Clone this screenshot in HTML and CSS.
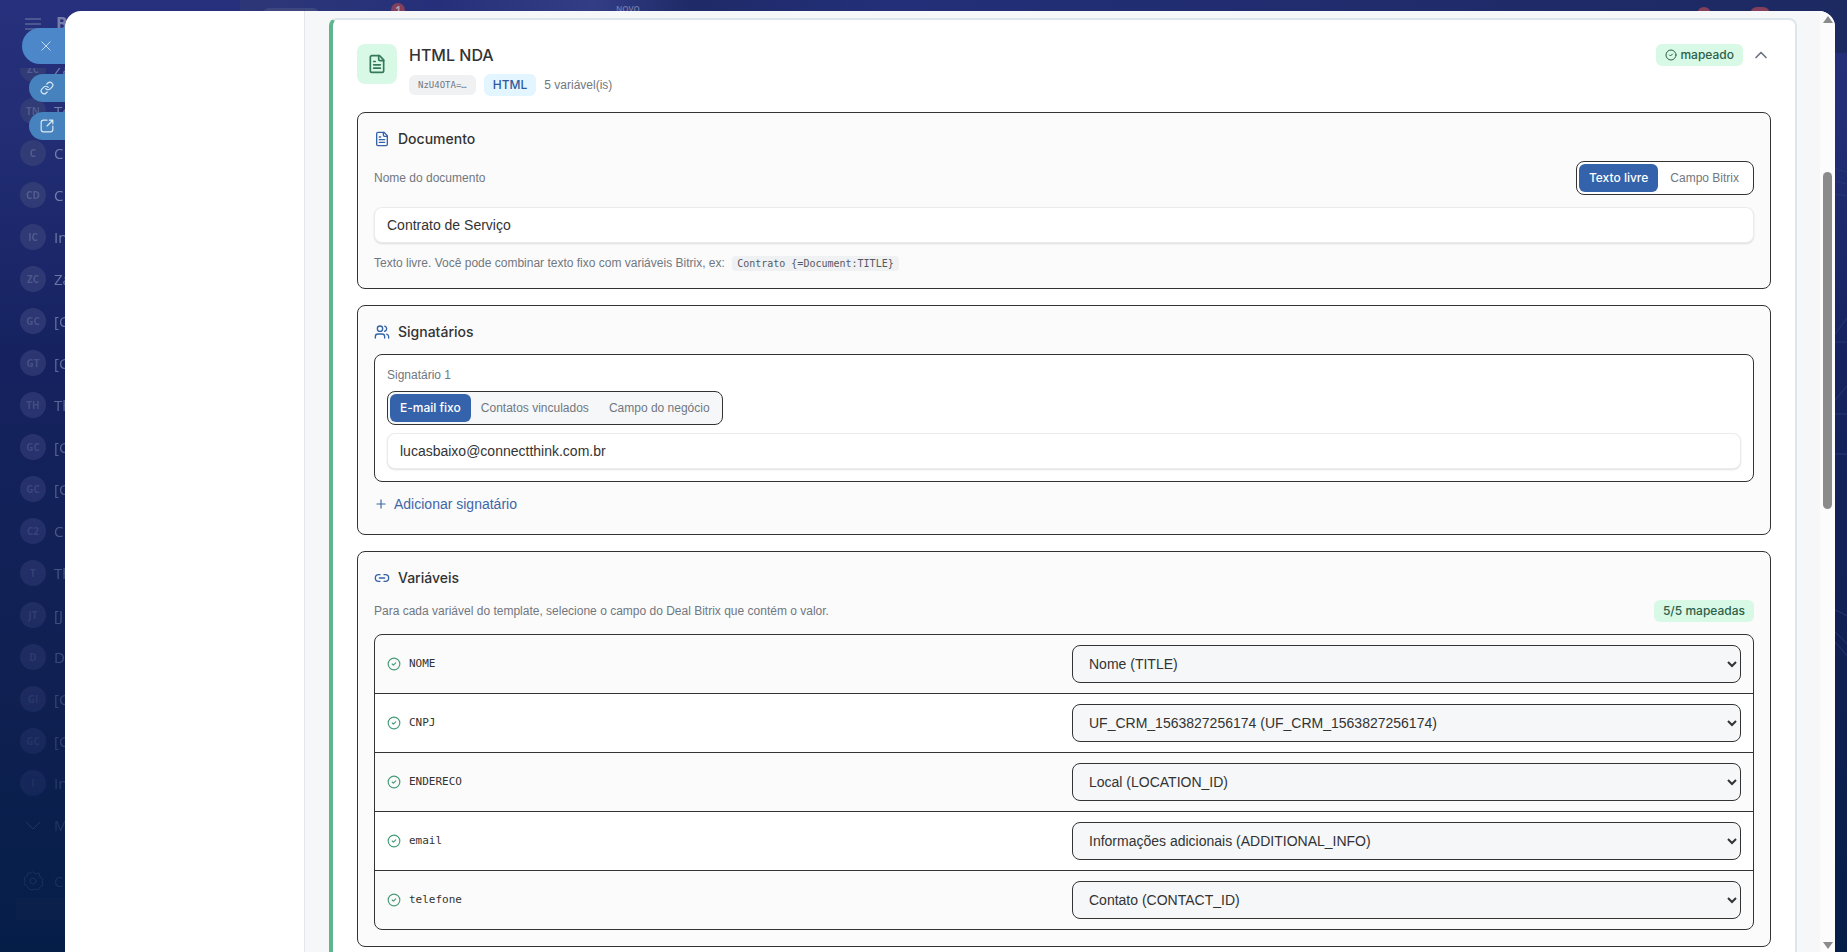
FILE: index.html
```html
<!DOCTYPE html>
<html lang="pt-BR">
<head>
    <meta charset="UTF-8">
    <meta name="viewport" content="width=device-width, initial-scale=1.0">
    <title>HTML NDA</title>
    <link rel="stylesheet" href="styles.css">
</head>
<body>
    <svg width="0" height="0" class="sprite">
        <symbol id="file" viewBox="0 0 24 24"><path d="M15 2H6a2 2 0 0 0-2 2v16a2 2 0 0 0 2 2h12a2 2 0 0 0 2-2V7Z"/><path d="M14 2v4a2 2 0 0 0 2 2h4"/><path d="M10 9H8"/><path d="M16 13H8"/><path d="M16 17H8"/></symbol>
        <symbol id="check" viewBox="0 0 24 24"><circle cx="12" cy="12" r="10"/><path d="m9 12 2 2 4-4"/></symbol>
    </svg>

    <!-- portal behind the slider -->
    <div class="backdrop">
        <div class="topbar">
            <span class="pill"></span>
            <span class="dot">1</span>
            <span class="novo">NOVO</span>
            <span class="dot dot-bell"></span>
            <span class="dot dot-user"></span>
        </div>
        <svg class="waves" viewBox="0 0 12 952" preserveAspectRatio="none"><path d="M0 168q6 3 12 4M0 181q6 2 12 3M0 194l12 2M0 334l12-16M0 342h12M0 400l12-14M0 414h12M0 454h12M0 610q8 3 12 6M0 632q6 5 12 12M0 642q6 6 12 14"/></svg>
        <div class="brand">
            <svg class="burger" viewBox="0 0 16 12"><path d="M0 1h16M0 6h16M0 11h16"/></svg>
            <span>B</span>
        </div>
        <ul class="menu">
            <li><i>ZC</i>Za</li>
            <li><i>TN</i>To</li>
            <li><i>C</i>C</li>
            <li><i>CD</i>C</li>
            <li><i>IC</i>In</li>
            <li><i>ZC</i>Za</li>
            <li><i>GC</i>[G</li>
            <li><i>GT</i>[G</li>
            <li><i>TH</i>Th</li>
            <li><i>GC</i>[G</li>
            <li><i>GC</i>[G</li>
            <li><i>C2</i>C</li>
            <li><i>T</i>Th</li>
            <li><i>JT</i>[J</li>
            <li><i>D</i>D</li>
            <li><i>GI</i>[G</li>
            <li><i>GC</i>[G</li>
            <li><i>I</i>In</li>
            <li><svg viewBox="0 0 26 26"><path d="M6 10l7 7 7-7"/></svg>M</li>
            <li class="config"><svg viewBox="0 0 26 26"><circle cx="13" cy="13" r="3"/><path d="M13 4l3 2 3-1 1 4 3 2-1 3 1 3-3 2-2 3-3-1-3 1-3-1-2-3-3-2 1-3-1-3 3-2 1-3 3 0z"/></svg>C</li>
        </ul>
        <div class="invite"></div>
    </div>

    <nav class="slider-labels">
        <button class="slider-label slider-close" aria-label="Fechar"><svg viewBox="0 0 12 12"><path d="M1 1l10 10M11 1L1 11"/></svg></button>
        <button class="slider-label" aria-label="Copiar link"><svg viewBox="0 0 24 24"><path d="M10 13a5 5 0 0 0 7.54.54l3-3a5 5 0 0 0-7.07-7.07l-1.72 1.71"/><path d="M14 11a5 5 0 0 0-7.54-.54l-3 3a5 5 0 0 0 7.07 7.07l1.71-1.71"/></svg></button>
        <button class="slider-label" aria-label="Abrir em nova aba"><svg viewBox="0 0 24 24"><path d="M12 2H6a4 4 0 0 0-4 4v12a4 4 0 0 0 4 4h12a4 4 0 0 0 4-4v-6M16 2h6v6M21 3l-9 9"/></svg></button>
    </nav>

    <div class="slider">
        <aside class="sidebar"></aside>

        <main class="main">
            <article class="card">
                <header class="card-header">
                    <span class="card-icon"><svg class="icon"><use href="#file"/></svg></span>
                    <div class="card-title">
                        <h1>HTML NDA</h1>
                        <div class="card-meta">
                            <code class="chip chip-id">NzU4OTA=…</code>
                            <span class="chip chip-type">HTML</span>
                            <span>5 variável(is)</span>
                        </div>
                    </div>
                    <span class="badge"><svg class="icon"><use href="#check"/></svg>mapeado</span>
                    <button class="collapse" aria-label="Recolher"><svg class="icon" viewBox="0 0 24 24"><path d="m18 15-6-6-6 6"/></svg></button>
                </header>

                <section class="section">
                    <h2><svg class="icon"><use href="#file"/></svg>Documento</h2>
                    <div class="row">
                        <label for="doc-name">Nome do documento</label>
                        <div class="toggle toggle-white">
                            <button class="active">Texto livre</button>
                            <button>Campo Bitrix</button>
                        </div>
                    </div>
                    <input id="doc-name" class="input" type="text" value="Contrato de Serviço">
                    <p class="hint">Texto livre. Você pode combinar texto fixo com variáveis Bitrix, ex: <code>Contrato {=Document:TITLE}</code></p>
                </section>

                <section class="section section-signers">
                    <h2><svg class="icon" viewBox="0 0 24 24"><path d="M16 21v-2a4 4 0 0 0-4-4H6a4 4 0 0 0-4 4v2"/><circle cx="9" cy="7" r="4"/><path d="M22 21v-2a4 4 0 0 0-3-3.87"/><path d="M16 3.13a4 4 0 0 1 0 7.75"/></svg>Signatários</h2>
                    <div class="signer">
                        <label for="signer-1">Signatário 1</label>
                        <div class="toggle">
                            <button class="active">E-mail fixo</button>
                            <button>Contatos vinculados</button>
                            <button>Campo do negócio</button>
                        </div>
                        <input id="signer-1" class="input" type="text" value="lucasbaixo@connectthink.com.br">
                    </div>
                    <button class="add"><svg class="icon" viewBox="0 0 24 24"><path d="M5 12h14"/><path d="M12 5v14"/></svg>Adicionar signatário</button>
                </section>

                <section class="section">
                    <h2><svg class="icon" viewBox="0 0 24 24"><path d="M9 17H7A5 5 0 0 1 7 7h2"/><path d="M15 7h2a5 5 0 1 1 0 10h-2"/><path d="M8 12h8"/></svg>Variáveis</h2>
                    <div class="row">
                        <p>Para cada variável do template, selecione o campo do Deal Bitrix que contém o valor.</p>
                        <span class="badge">5/5 mapeadas</span>
                    </div>
                    <div class="vars">
                        <div class="var">
                            <label for="var-nome"><svg class="icon"><use href="#check"/></svg>NOME</label>
                            <select id="var-nome"><option>Nome (TITLE)</option></select>
                        </div>
                        <div class="var">
                            <label for="var-cnpj"><svg class="icon"><use href="#check"/></svg>CNPJ</label>
                            <select id="var-cnpj"><option>UF_CRM_1563827256174 (UF_CRM_1563827256174)</option></select>
                        </div>
                        <div class="var">
                            <label for="var-endereco"><svg class="icon"><use href="#check"/></svg>ENDERECO</label>
                            <select id="var-endereco"><option>Local (LOCATION_ID)</option></select>
                        </div>
                        <div class="var">
                            <label for="var-email"><svg class="icon"><use href="#check"/></svg>email</label>
                            <select id="var-email"><option>Informações adicionais (ADDITIONAL_INFO)</option></select>
                        </div>
                        <div class="var">
                            <label for="var-telefone"><svg class="icon"><use href="#check"/></svg>telefone</label>
                            <select id="var-telefone"><option>Contato (CONTACT_ID)</option></select>
                        </div>
                    </div>
                </section>
            </article>
        </main>

        <div class="scrollbar">
            <span class="arrow arrow-up"></span>
            <div class="track"><div class="thumb"></div></div>
            <span class="arrow arrow-down"></span>
        </div>
    </div>
</body>
</html>
```

FILE: styles.css
```css
* {
    margin: 0;
    padding: 0;
    box-sizing: border-box;
}

body {
    height: 100vh;
    overflow: hidden;
    display: flex;
    padding: 11px 12px 0 0;
    background: linear-gradient(180deg, #26307c 0%, #232e76 12%, #15225f 38%, #102052 70%, #051e48 100%);
    font-family: "Liberation Sans", Arial, sans-serif;
    font-size: 12px;
    line-height: 16px;
    color: #333;
}

button,
input,
select {
    font: inherit;
    color: inherit;
}

button {
    border: none;
    background: none;
    cursor: pointer;
}

h1,
h2,
.badge,
.chip-type,
.toggle .active {
    font-family: Inter, sans-serif;
    font-weight: 500;
}

svg {
    fill: none;
    stroke: currentColor;
    stroke-width: 2;
    stroke-linecap: round;
    stroke-linejoin: round;
    flex-shrink: 0;
}

.sprite {
    position: absolute;
}

.icon {
    width: 14px;
    height: 14px;
}

/* portal behind the slider */
.backdrop {
    position: absolute;
    inset: 0;
    overflow: hidden;
    font-family: "Open Sans", sans-serif;
    color: #757fab;
}

.topbar {
    position: absolute;
    top: 0;
    left: 240px;
    right: 0;
    height: 53px;
    background: linear-gradient(90deg, #2d3777 0%, #26307a 12%, #323d85 22%, #1f2a68 28%, #232f78 40%, #1d2961 100%);
}

.pill {
    position: absolute;
    left: 23px;
    top: 8px;
    width: 56px;
    height: 24px;
    border-radius: 6px;
    background: #3e4780;
}

.dot {
    position: absolute;
    left: 151px;
    top: 3px;
    width: 14px;
    height: 14px;
    border-radius: 7px;
    background: #843f5c;
    color: #b3a3b5;
    font-size: 10px;
    font-weight: 700;
    line-height: 14px;
    text-align: center;
}

.dot-bell {
    left: auto;
    right: 136px;
    top: 7px;
}

.dot-user {
    left: auto;
    right: 77px;
    top: 7px;
    width: 20px;
}

.novo {
    position: absolute;
    left: 376px;
    top: 4px;
    font-size: 8px;
    font-weight: 600;
    line-height: 10px;
}

.waves {
    position: absolute;
    right: 0;
    top: 0;
    width: 12px;
    height: 100%;
    color: #243874;
    stroke-width: 1;
}

.brand {
    display: flex;
    gap: 15px;
    align-items: center;
    height: 48px;
    padding-left: 25px;
    font-size: 17px;
    font-weight: 700;
}

.burger {
    width: 16px;
    height: 12px;
    stroke-width: 1;
}

/* the list is scrolled a little, its first row is half hidden */
.menu {
    margin-top: 20px;
    height: 830px;
    overflow: hidden;
    list-style: none;
    -webkit-mask-image: linear-gradient(#000 0%, #000 15%, rgba(0, 0, 0, 0.15) 100%);
    mask-image: linear-gradient(#000 0%, #000 15%, rgba(0, 0, 0, 0.15) 100%);
}

.menu li {
    display: flex;
    align-items: center;
    gap: 8px;
    height: 42px;
    padding-left: 20px;
    font-size: 15px;
}

.menu li:first-child {
    margin-top: -20px;
}

.menu i {
    width: 26px;
    height: 26px;
    flex-shrink: 0;
    border-radius: 13px;
    background: #313b76;
    color: #535d90;
    font-size: 10px;
    font-style: normal;
    font-weight: 700;
    line-height: 26px;
    text-align: center;
}

.menu svg {
    width: 26px;
    height: 26px;
    stroke-width: 1;
}

.menu .config {
    margin-top: 14px;
}

.invite {
    margin-left: 16px;
    width: 200px;
    height: 22px;
    background: #0b204a;
}

/* round labels hanging from the slider edge */
.slider-labels {
    position: relative;
    width: 65px;
    flex-shrink: 0;
    display: flex;
    flex-direction: column;
    align-items: flex-end;
    gap: 10px;
    padding-top: 17px;
}

.slider-label {
    width: 36px;
    height: 28px;
    padding-left: 11px;
    border-radius: 14px 0 0 14px;
    background: #4682bd;
    color: #dceaf6;
    text-align: left;
}

.slider-label svg {
    display: block;
    width: 14px;
    height: 14px;
}

.slider-close {
    width: 43px;
    height: 36px;
    padding-left: 19px;
    border-radius: 18px 0 0 18px;
    background: #4c88c9;
}

.slider-close svg {
    width: 10px;
    height: 10px;
    stroke-width: 1;
}

.slider {
    position: relative;
    flex: 1;
    min-width: 0;
    display: flex;
    overflow: hidden;
    border-radius: 16px 16px 0 0;
    background: #fff;
}

.sidebar {
    width: 240px;
    flex-shrink: 0;
    border-right: 1px solid #e3e6ea;
}

.main {
    flex: 1;
    min-width: 0;
    padding: 7px 23px 0 24px;
    background: #f5f7f9;
}

.card {
    display: flex;
    flex-direction: column;
    gap: 16px;
    padding: 24px;
    border: 2px solid #dde6ea;
    border-left: 4px solid #5eb58c;
    border-radius: 8px;
    background: #fff;
}

.card-header {
    display: flex;
    align-items: flex-start;
    gap: 12px;
    height: 52px;
}

.card-icon {
    display: flex;
    align-items: center;
    justify-content: center;
    width: 40px;
    height: 40px;
    border-radius: 8px;
    background: #d7f9e5;
    color: #36785a;
}

.card-icon .icon {
    width: 20px;
    height: 20px;
}

.card-title {
    flex: 1;
}

h1 {
    font-size: 16px;
    line-height: 22px;
}

.card-meta {
    display: flex;
    align-items: center;
    gap: 8px;
    margin-top: 8px;
    color: #717780;
}

.chip {
    padding: 3px 9px;
    border-radius: 6px;
}

.chip-id {
    padding: 2px 9px;
    background: #f0f1f3;
    font-family: "DejaVu Sans Mono", monospace;
    font-size: 9px;
}

.chip-type {
    background: #e3f5fe;
    color: #2f5a9e;
}

.badge {
    display: flex;
    align-items: center;
    gap: 3px;
    padding: 3px 9px;
    border-radius: 6px;
    background: #d7f9e5;
    color: #2d5f4b;
}

.badge .icon {
    width: 12px;
    height: 12px;
}

.collapse {
    height: 22px;
    margin-left: -4px;
    color: #6b7280;
}

.collapse .icon {
    display: block;
    width: 20px;
    height: 20px;
}

.section {
    display: flex;
    flex-direction: column;
    gap: 12px;
    padding: 16px;
    border: 1px solid #333;
    border-radius: 8px;
    background: #fbfbfb;
}

h2 {
    display: flex;
    align-items: center;
    gap: 8px;
    font-size: 14px;
    line-height: 20px;
}

h2 .icon {
    width: 16px;
    height: 16px;
    color: #3563a8;
}

.row {
    display: flex;
    align-items: center;
    justify-content: space-between;
    color: #717780;
}

.toggle {
    display: flex;
    align-self: flex-start;
    padding: 2px;
    border: 1px solid #333;
    border-radius: 8px;
    background: #f5f7f9;
    color: #717780;
}

.toggle button {
    height: 28px;
    padding: 0 10px;
    border-radius: 6px;
}

.toggle .active {
    background: #3563ab;
    color: #fff;
}

.toggle-white {
    background: #fff;
}

.toggle-white button {
    padding: 0 12px;
}

.toggle-white .active {
    padding: 0 10px;
}

.input {
    width: 100%;
    height: 36px;
    padding: 0 12px;
    border: 1px solid #eaebec;
    border-radius: 8px;
    background: #fff;
    box-shadow: 0 1px 2px rgba(0, 0, 0, 0.12);
    font-size: 14px;
}

.hint {
    line-height: 17px;
    color: #717780;
}

.hint code {
    margin-left: 4px;
    padding: 2px 5px;
    border-radius: 4px;
    background: #f0f1f3;
    font-family: "DejaVu Sans Mono", monospace;
    font-size: 10px;
    line-height: 1;
    color: #555a62;
}

.section-signers {
    gap: 8px;
}

.section-signers h2 {
    margin-bottom: 4px;
}

.signer {
    display: flex;
    flex-direction: column;
    gap: 8px;
    padding: 12px;
    border: 1px solid #333;
    border-radius: 8px;
    background: #fff;
}

.signer label {
    color: #717780;
}

.add {
    display: flex;
    align-items: center;
    align-self: flex-start;
    gap: 6px;
    height: 28px;
    font-size: 14px;
    color: #3f66a8;
}

.vars {
    border: 1px solid #333;
    border-radius: 8px;
    overflow: hidden;
}

.var {
    display: grid;
    grid-template-columns: 1fr 1fr;
    gap: 16px;
    align-items: center;
    padding: 10px 12px;
    border-bottom: 1px solid #333;
}

.var:nth-child(even) {
    background: #fff;
}

.var:last-child {
    border-bottom: none;
}

.var label {
    display: flex;
    align-items: center;
    gap: 8px;
    font-family: "DejaVu Sans Mono", monospace;
    font-size: 11px;
}

.var .icon {
    color: #469b77;
}

.var select {
    width: 100%;
    height: 38px;
    padding: 0 12px;
    border: 1px solid #333;
    border-radius: 8px;
    background: #f5f7f9;
    font-size: 14px;
}

.scrollbar {
    display: flex;
    flex-direction: column;
    align-items: center;
    gap: 3px;
    width: 15px;
    padding: 5px 0 3px;
    background: #fcfcfc;
}

.arrow {
    border: 5px solid transparent;
}

.arrow-up {
    border-top: none;
    border-bottom: 7px solid #8b8b8b;
}

.arrow-down {
    border-bottom: none;
    border-top: 7px solid #8b8b8b;
}

.track {
    flex: 1;
    width: 9px;
    padding-top: 146px;
}

.thumb {
    height: 44%;
    border-radius: 5px;
    background: #8b8b8b;
}
```
